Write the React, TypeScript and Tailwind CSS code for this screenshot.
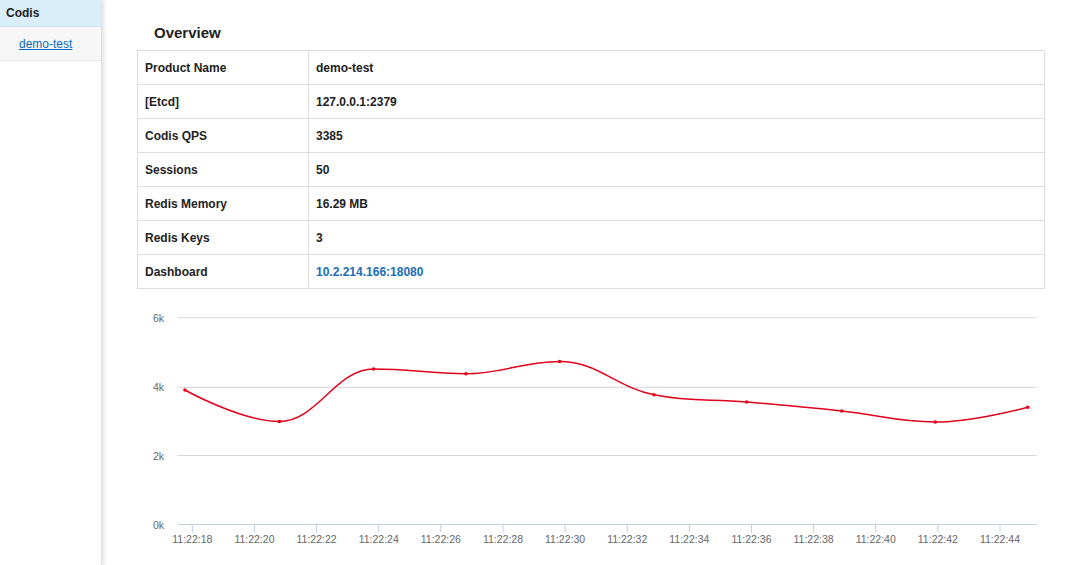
import React from "react";

const rows: [string, string, boolean?][] = [
  ["Product Name", "demo-test"],
  ["[Etcd]", "127.0.0.1:2379"],
  ["Codis QPS", "3385"],
  ["Sessions", "50"],
  ["Redis Memory", "16.29 MB"],
  ["Redis Keys", "3"],
  ["Dashboard", "10.2.214.166:18080", true],
];

const pts: [number, number][] = [
  [185, 390],
  [279.3, 421.5],
  [373.5, 369],
  [466, 373.7],
  [559.7, 361.5],
  [654, 394.7],
  [746.7, 402],
  [841.7, 411],
  [935.3, 422],
  [1027.7, 407.3],
];

function splinePath(p: [number, number][]) {
  const s = 1.5;
  const d = s + 1;
  const ctrl = p.map((pt, i) => {
    if (i === 0 || i === p.length - 1) return { l: pt, r: pt };
    const [lx, ly] = p[i - 1];
    const [x, y] = pt;
    const [nx, ny] = p[i + 1];
    const lcx = (s * x + lx) / d;
    let lcy = (s * y + ly) / d;
    const rcx = (s * x + nx) / d;
    let rcy = (s * y + ny) / d;
    if (rcx !== lcx) {
      const c = ((rcy - lcy) * (rcx - x)) / (rcx - lcx) + y - rcy;
      lcy += c;
      rcy += c;
    }
    if (lcy > ly && lcy > y) {
      lcy = Math.max(ly, y);
      rcy = 2 * y - lcy;
    } else if (lcy < ly && lcy < y) {
      lcy = Math.min(ly, y);
      rcy = 2 * y - lcy;
    }
    if (rcy > ny && rcy > y) {
      rcy = Math.max(ny, y);
      lcy = 2 * y - rcy;
    } else if (rcy < ny && rcy < y) {
      rcy = Math.min(ny, y);
      lcy = 2 * y - rcy;
    }
    return { l: [lcx, lcy] as [number, number], r: [rcx, rcy] as [number, number] };
  });
  let path = `M ${p[0][0]} ${p[0][1]}`;
  for (let i = 1; i < p.length; i++) {
    const a = ctrl[i - 1].r;
    const b = ctrl[i].l;
    path += ` C ${a[0]} ${a[1]} ${b[0]} ${b[1]} ${p[i][0]} ${p[i][1]}`;
  }
  return path;
}

const grid = [
  { y: 317.7, label: "6k" },
  { y: 387.3, label: "4k" },
  { y: 455.5, label: "2k" },
];

const ticks = Array.from({ length: 14 }, (_, k) => ({
  x: 192.3 + 62.13 * k,
  label: `11:22:${String(18 + 2 * k).padStart(2, "0")}`,
}));

function Chart() {
  return (
    <svg width={908} height={276} className="block">
      <g transform="translate(-137 -289)" fontFamily="'Liberation Sans', Arial, sans-serif">
        {grid.map((g) => (
          <g key={g.label}>
            <line x1={177.5} x2={1037} y1={g.y} y2={g.y} stroke="#d8d8d8" strokeWidth={1} />
            <text x={164} y={g.y + 4} textAnchor="end" fontSize={10.5} fill="#666">
              {g.label}
            </text>
          </g>
        ))}
        <text x={164} y={528.5} textAnchor="end" fontSize={10.5} fill="#666">
          0k
        </text>
        <line x1={177.5} x2={1037} y1={524.5} y2={524.5} stroke="#c0d0e0" strokeWidth={1} />
        {ticks.map((t) => (
          <g key={t.label}>
            <line x1={t.x} x2={t.x} y1={524.5} y2={532.5} stroke="#c0d0e0" strokeWidth={1} />
            <text x={t.x} y={542.5} textAnchor="middle" fontSize={10.5} fill="#666">
              {t.label}
            </text>
          </g>
        ))}
        <path d={splinePath(pts)} fill="none" stroke="#e0001b" strokeWidth={1.5} />
        {pts.map(([x, y], i) => (
          <circle key={i} cx={x} cy={y} r={1.8} fill="#e0001b" />
        ))}
      </g>
    </svg>
  );
}

export default function App() {
  return (
    <div
      className="relative flex h-[565px] w-[1078px] overflow-hidden bg-white text-[#333]"
      style={{ fontFamily: "'Liberation Sans', Arial, Helvetica, sans-serif" }}
    >
      <div className="relative z-10 flex h-full w-[102px] shrink-0 flex-col bg-white shadow-[2px_0_4px_rgba(0,0,0,0.12)] border-r border-[#e2e2e2]">
        <div className="flex h-[27px] items-center border-b border-[#d0e2ef] bg-[#d9edfb] pl-[6px] text-[12px] font-bold text-[#222]">
          Codis
        </div>
        <div className="flex h-[34px] items-center border-b border-[#e6e6e6] bg-[#f7f7f7] pl-[19px] text-[12px]">
          <a className="text-[#0a6ac0] underline">demo-test</a>
        </div>
      </div>
      <div className="absolute left-0 top-[292px] h-[4px] w-[2px] bg-[#2a9fd6]" />
      <div className="flex flex-1 flex-col pl-[35px]">
        <h2 className="mt-[23px] mb-[7px] pl-[17px] text-[15px] font-bold leading-[20px] text-[#222]">
          Overview
        </h2>
        <div className="w-[908px] border-b border-[#dddddd]">
          {rows.map(([k, v, link]) => (
            <div
              key={k}
              className="flex h-[34px] border-t border-x border-[#dddddd] text-[12px] font-bold"
            >
              <div className="flex w-[171px] items-center border-r border-[#dddddd] pl-[7px] text-[#222]">
                {k}
              </div>
              <div className={`flex flex-1 items-center pl-[7px] ${link ? "text-[#1a6db5]" : "text-[#222]"}`}>
                {v}
              </div>
            </div>
          ))}
        </div>
        <Chart />
      </div>
    </div>
  );
}
